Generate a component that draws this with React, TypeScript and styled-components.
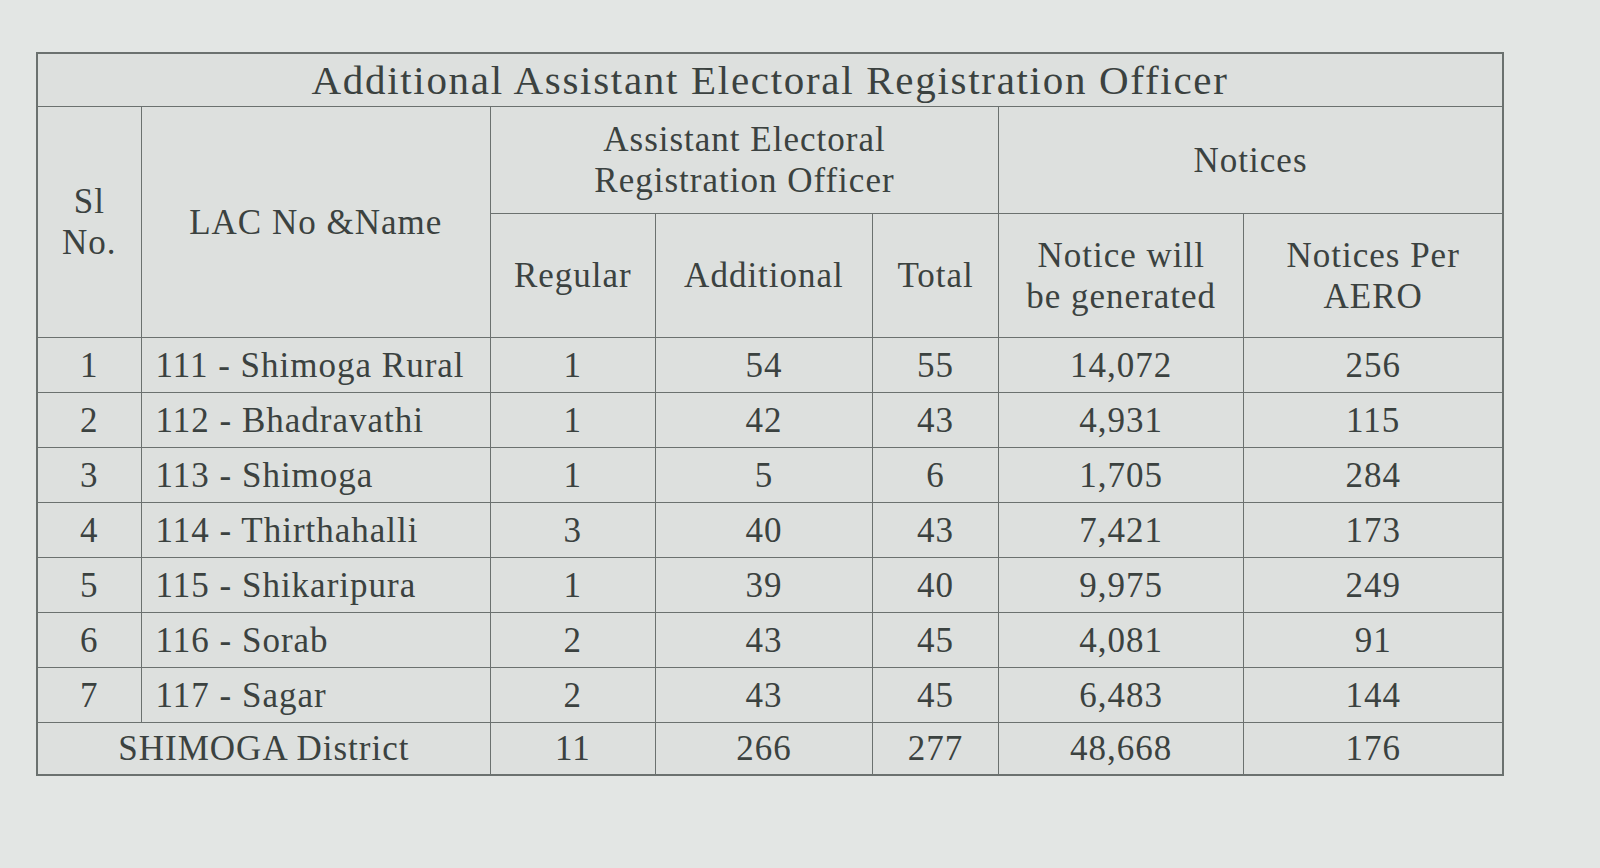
import styled, { createGlobalStyle } from "styled-components"

const Global = createGlobalStyle`
    html, body {
        margin: 0;
        background: #e3e6e4;
    }
`

const Page = styled.div`
    padding: 52px 0 0 36px;
    height: 868px;
    box-sizing: border-box;
    font-family: "Liberation Serif", "DejaVu Serif", serif;
    color: #3b4240;
`

const Sheet = styled.table`
    width: 1468px;
    border-collapse: collapse;
    background: #dde0de;
    border: 2px solid #6b716f;
`

const TitleCell = styled.th`
    height: 52px;
    font-size: 41px;
    font-weight: normal;
    text-align: center;
    border: 1.5px solid #6b716f;
    padding: 0;
    line-height: 1;
    letter-spacing: 1.7px;
`

const HeadCell = styled.th<{ $h?: number }>`
    height: ${(p) => (p.$h ? `${p.$h}px` : "auto")};
    font-size: 35px;
    font-weight: normal;
    line-height: 41px;
    text-align: center;
    vertical-align: middle;
    border: 1.5px solid #6b716f;
    padding: 0 4px;
    letter-spacing: 1px;
`

const Cell = styled.td<{ $left?: boolean }>`
    height: 54px;
    font-size: 35px;
    letter-spacing: 1px;
    text-align: ${(p) => (p.$left ? "left" : "center")};
    padding: ${(p) => (p.$left ? "0 0 0 14px" : "0")};
    border: 1.5px solid #6b716f;
    line-height: 1;
    vertical-align: middle;
`

const TotalRow = styled.tr`
    td {
        height: 51px;
    }
`

const rows = [
    ["1", "111 - Shimoga Rural", "1", "54", "55", "14,072", "256"],
    ["2", "112 - Bhadravathi", "1", "42", "43", "4,931", "115"],
    ["3", "113 - Shimoga", "1", "5", "6", "1,705", "284"],
    ["4", "114 - Thirthahalli", "3", "40", "43", "7,421", "173"],
    ["5", "115 - Shikaripura", "1", "39", "40", "9,975", "249"],
    ["6", "116 - Sorab", "2", "43", "45", "4,081", "91"],
    ["7", "117 - Sagar", "2", "43", "45", "6,483", "144"],
]

const widths = [104, 349, 165, 217, 126, 245, 259]

export default function App() {
    return (
        <Page>
            <Global />
            <Sheet>
                <colgroup>
                    {widths.map((w, i) => (
                        <col key={i} style={{ width: w }} />
                    ))}
                </colgroup>
                <thead>
                    <tr>
                        <TitleCell colSpan={7}>
                            Additional Assistant Electoral Registration Officer
                        </TitleCell>
                    </tr>
                    <tr>
                        <HeadCell rowSpan={2}>
                            Sl
                            <br />
                            No.
                        </HeadCell>
                        <HeadCell rowSpan={2}>LAC No &amp;Name</HeadCell>
                        <HeadCell colSpan={3} $h={106}>
                            Assistant Electoral
                            <br />
                            Registration Officer
                        </HeadCell>
                        <HeadCell colSpan={2}>Notices</HeadCell>
                    </tr>
                    <tr>
                        <HeadCell $h={123}>Regular</HeadCell>
                        <HeadCell>Additional</HeadCell>
                        <HeadCell>Total</HeadCell>
                        <HeadCell>
                            Notice will
                            <br />
                            be generated
                        </HeadCell>
                        <HeadCell>
                            Notices Per
                            <br />
                            AERO
                        </HeadCell>
                    </tr>
                </thead>
                <tbody>
                    {rows.map((r) => (
                        <tr key={r[0]}>
                            {r.map((v, i) => (
                                <Cell key={i} $left={i === 1}>
                                    {v}
                                </Cell>
                            ))}
                        </tr>
                    ))}
                    <TotalRow>
                        <Cell colSpan={2}>SHIMOGA District</Cell>
                        <Cell>11</Cell>
                        <Cell>266</Cell>
                        <Cell>277</Cell>
                        <Cell>48,668</Cell>
                        <Cell>176</Cell>
                    </TotalRow>
                </tbody>
            </Sheet>
        </Page>
    )
}
